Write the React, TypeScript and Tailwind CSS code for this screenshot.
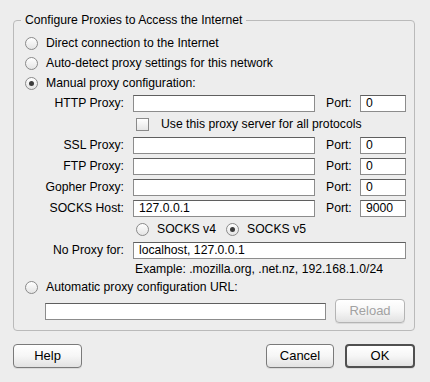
import type { ReactNode } from "react";

function Radio({ checked = false }: { checked?: boolean }) {
  return (
    <span className="flex h-[13px] w-[13px] shrink-0 items-center justify-center rounded-full border border-[#8a8a8a] bg-linear-to-b from-white to-[#e4e4e4]">
      {checked && <span className="h-[5px] w-[5px] rounded-full bg-[#3c3c3c]" />}
    </span>
  );
}

function TextBox({ width, value = "" }: { width: string; value?: string }) {
  return (
    <div
      className={`flex h-[17px] shrink-0 items-center border border-[#8c8c8c] border-t-[#5f5f5f] bg-white pl-[5px] text-black ${width}`}
    >
      {value}
    </div>
  );
}

function Button({ children, width, kind = "normal" }: { children: ReactNode; width: string; kind?: "normal" | "default" | "disabled" }) {
  const look =
    kind === "default"
      ? "border-2 border-[#505050] text-black"
      : kind === "disabled"
        ? "border border-[#b4b4b4] text-[#a2a2a2]"
        : "border border-[#7a7a7a] text-black";
  return (
    <div
      className={`flex h-[24px] shrink-0 items-center justify-center rounded-[4px] bg-linear-to-b from-white via-[#f6f6f6] to-[#e2e2e2] text-[13px] shadow-[0_1px_0_rgba(0,0,0,0.08)] ${look} ${width}`}
    >
      {children}
    </div>
  );
}

function ProxyRow({ label, host = "", port }: { label: string; host?: string; port: string }) {
  return (
    <div className="flex h-[21px] items-center">
      <span className="w-[110px] text-right">{label}</span>
      <div className="ml-[9px]">
        <TextBox width="w-[182px]" value={host} />
      </div>
      <span className="ml-[11px] w-[34px]">Port:</span>
      <TextBox width="w-[46px]" value={port} />
    </div>
  );
}

export default function App() {
  return (
    <div
      className="h-[382px] w-[430px] bg-[#ededed] px-[13px] pt-[13px] text-[12.2px] text-black"
      style={{ fontFamily: '"Liberation Sans", Arial, sans-serif' }}
    >
      <fieldset className="w-[402px] rounded-[4px] border border-[#bababa]">
        <legend className="ml-[7px] px-[4px] leading-[15px]">Configure Proxies to Access the Internet</legend>

        <div className="flex flex-col pb-[4px] pt-[5px]">
          <div className="flex h-[20px] items-center gap-[8px] pl-[11px]">
            <Radio />
            <span>Direct connection to the Internet</span>
          </div>
          <div className="flex h-[20px] items-center gap-[8px] pl-[11px]">
            <Radio />
            <span>Auto-detect proxy settings for this network</span>
          </div>
          <div className="flex h-[20px] items-center gap-[8px] pl-[11px]">
            <Radio checked />
            <span>Manual proxy configuration:</span>
          </div>

          <ProxyRow label="HTTP Proxy:" port="0" />

          <div className="flex h-[21px] items-center pl-[122px]">
            <span className="h-[13px] w-[13px] shrink-0 border border-[#8a8a8a] bg-linear-to-b from-white to-[#e6e6e6]" />
            <span className="ml-[12px]">Use this proxy server for all protocols</span>
          </div>

          <ProxyRow label="SSL Proxy:" port="0" />
          <ProxyRow label="FTP Proxy:" port="0" />
          <ProxyRow label="Gopher Proxy:" port="0" />
          <ProxyRow label="SOCKS Host:" host="127.0.0.1" port="9000" />

          <div className="flex h-[21px] items-center pl-[122px]">
            <div className="flex w-[90px] items-center gap-[8px]">
              <Radio />
              <span>SOCKS v4</span>
            </div>
            <div className="flex items-center gap-[8px]">
              <Radio checked />
              <span>SOCKS v5</span>
            </div>
          </div>

          <div className="flex h-[20px] items-center">
            <span className="w-[110px] text-right">No Proxy for:</span>
            <div className="ml-[9px]">
              <TextBox width="w-[273px]" value="localhost, 127.0.0.1" />
            </div>
          </div>

          <div className="flex h-[18px] items-center pl-[121px]">
            Example: .mozilla.org, .net.nz, 192.168.1.0/24
          </div>

          <div className="flex h-[18px] items-center gap-[8px] pl-[11px]">
            <Radio />
            <span>Automatic proxy configuration URL:</span>
          </div>

          <div className="flex h-[30px] items-center pl-[31px]">
            <TextBox width="w-[281px]" />
            <div className="ml-[9px]">
              <Button width="w-[70px]" kind="disabled">
                Reload
              </Button>
            </div>
          </div>
        </div>
      </fieldset>

      <div className="mt-[13px] flex w-[402px] items-center justify-between">
        <Button width="w-[69px]">Help</Button>
        <div className="flex items-center gap-[11px]">
          <Button width="w-[68px]">Cancel</Button>
          <Button width="w-[70px]" kind="default">
            OK
          </Button>
        </div>
      </div>
    </div>
  );
}
